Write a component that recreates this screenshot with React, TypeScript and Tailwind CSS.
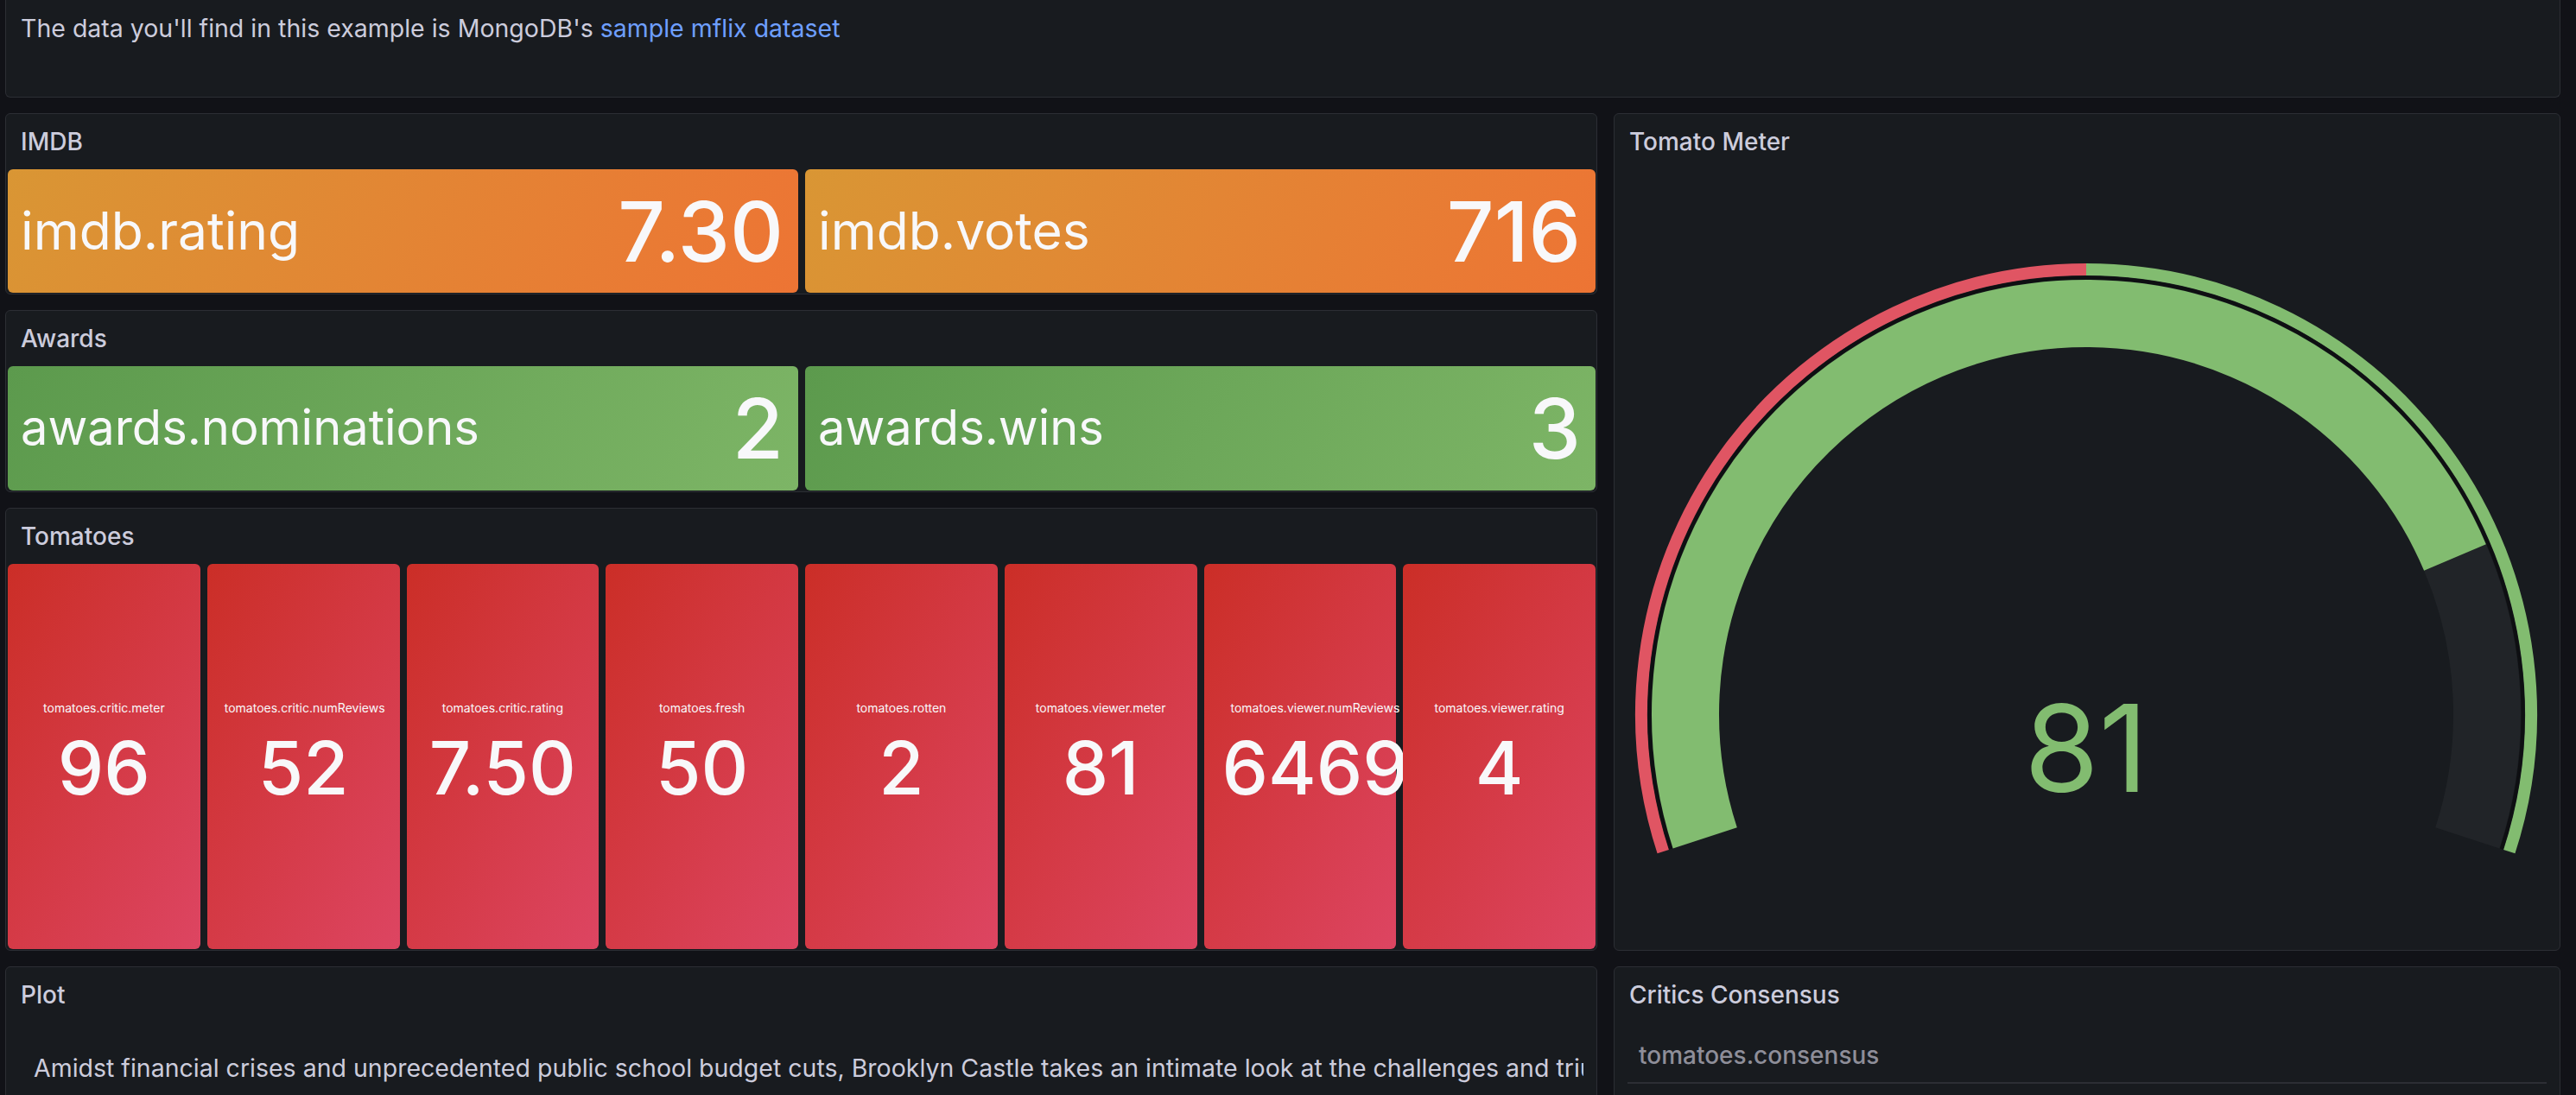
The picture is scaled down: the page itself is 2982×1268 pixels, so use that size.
import React from "react";

// gauge geometry, in svg units of the Tomato Meter body
const CX = 546;
const CY = 631;
const START = 198;
const SWEEP = 216;

function pt(r: number, a: number): [number, number] {
  const rad = (a * Math.PI) / 180;
  return [CX + r * Math.cos(rad), CY - r * Math.sin(rad)];
}

function arc(r: number, a1: number, a2: number) {
  const [x1, y1] = pt(r, a1);
  const [x2, y2] = pt(r, a2);
  const large = a1 - a2 > 180 ? 1 : 0;
  return `M ${x1} ${y1} A ${r} ${r} 0 ${large} 1 ${x2} ${y2}`;
}

function angleOf(pct: number) {
  return START - (pct / 100) * SWEEP;
}

function PanelTitle(props: { title: string }) {
  return (
    <div className="h-[64px] flex items-center pl-[17px] text-[28px] font-medium text-[#ccccdc] shrink-0">
      {props.title}
    </div>
  );
}

function WideStat(props: { name: string; value: string; gradient: string; nameSize: string }) {
  return (
    <div className={`flex-1 h-full rounded-md flex items-center justify-between pl-[15px] pr-[17px] text-[#f8f8fa] ${props.gradient}`}>
      <span className={`${props.nameSize} leading-[1.2]`}>{props.name}</span>
      <span className="text-[96px] leading-none font-medium">{props.value}</span>
    </div>
  );
}

// wide values spill out of the box from the left, like the grafana stat does
function TallStat(props: { name: string; value: string; spill?: boolean }) {
  return (
    <div className="h-full rounded-md flex flex-col justify-center pb-[9px] text-[#f8f8fa] bg-[linear-gradient(120deg,#cb2e27,#dd4562)]">
      <div className={`text-[14px] leading-[16px] whitespace-nowrap ${props.spill ? "pl-[31px] text-left" : "px-[20px] text-center"}`}>
        {props.name}
      </div>
      <div className={`text-[85px] leading-none font-medium mt-[19px] whitespace-nowrap ${props.spill ? "pl-[21px] text-left" : "px-[20px] text-center"}`}>
        {props.value}
      </div>
    </div>
  );
}

const orange = "bg-[linear-gradient(120deg,#d99634,#ed7434)]";
const green = "bg-[linear-gradient(120deg,#5c9a4d,#7db566)]";

const tomatoes = [
  { name: "tomatoes.critic.meter", value: "96" },
  { name: "tomatoes.critic.numReviews", value: "52" },
  { name: "tomatoes.critic.rating", value: "7.50" },
  { name: "tomatoes.fresh", value: "50" },
  { name: "tomatoes.rotten", value: "2" },
  { name: "tomatoes.viewer.meter", value: "81" },
  { name: "tomatoes.viewer.numReviews", value: "6469", spill: true },
  { name: "tomatoes.viewer.rating", value: "4" },
];

function Gauge(props: { value: number }) {
  const mid = angleOf(50);
  const end = angleOf(100);
  const fill = angleOf(props.value);
  return (
    <svg className="w-full h-full" viewBox="0 0 1094 904">
      <path d={arc(515, START, mid)} stroke="#e05563" strokeWidth={14} fill="none" />
      <path d={arc(515, mid, end)} stroke="#82bc70" strokeWidth={14} fill="none" />
      <path d={arc(505.5, START, end)} stroke="#0e0f12" strokeWidth={4} fill="none" />
      <path d={arc(464, fill, end)} stroke="#212428" strokeWidth={78} fill="none" />
      <path d={arc(464, START, fill)} stroke="#82bc70" strokeWidth={78} fill="none" />
      <text x={CX} y={721} textAnchor="middle" fontSize={140} fill="#82bc70" fontFamily="Inter, sans-serif">
        {props.value}
      </text>
    </svg>
  );
}

export default function App() {
  const panel = "bg-[#181b1f] border border-[#2c2e34] rounded-md";
  return (
    <div className="w-[2982px] h-[1268px] overflow-hidden bg-[#111217] pl-[6px] pr-[18px] font-['Inter',sans-serif] text-[#ccccdc]">
      {/* text panel, its top is scrolled out of view */}
      <div className="h-[113px] bg-[#181b1f] border-x border-b border-[#2c2e34] rounded-b-md pt-[12px] pl-[17px] text-[28.5px] leading-[42px]">
        The data you'll find in this example is MongoDB's{" "}
        <a className="text-[#6e9fff]">sample mflix dataset</a>
      </div>

      <div className="flex gap-[19px] mt-[18px]">
        <div className="w-[1843px] flex flex-col gap-[18px]">
          <div className={`h-[210px] flex flex-col ${panel}`}>
            <PanelTitle title="IMDB" />
            <div className="flex-1 flex gap-[8px] pl-[2px] pr-[1px] pb-[1px]">
              <WideStat name="imdb.rating" value="7.30" gradient={orange} nameSize="text-[60.5px]" />
              <WideStat name="imdb.votes" value="716" gradient={orange} nameSize="text-[60.5px]" />
            </div>
          </div>

          <div className={`h-[211px] flex flex-col ${panel}`}>
            <PanelTitle title="Awards" />
            <div className="flex-1 flex gap-[8px] pl-[2px] pr-[1px] pb-[1px]">
              <WideStat name="awards.nominations" value="2" gradient={green} nameSize="text-[56px]" />
              <WideStat name="awards.wins" value="3" gradient={green} nameSize="text-[56px]" />
            </div>
          </div>

          <div className={`h-[513px] flex flex-col ${panel}`}>
            <PanelTitle title="Tomatoes" />
            <div className="flex-1 grid grid-cols-8 gap-[8px] pl-[2px] pr-[1px] pb-[1px]">
              {tomatoes.map((t) => (
                <TallStat key={t.name} name={t.name} value={t.value} spill={t.spill} />
              ))}
            </div>
          </div>
        </div>

        <div className={`w-[1096px] h-[970px] flex flex-col ${panel}`}>
          <PanelTitle title="Tomato Meter" />
          <div className="flex-1">
            <Gauge value={81} />
          </div>
        </div>
      </div>

      <div className="flex gap-[19px] mt-[18px]">
        <div className={`w-[1843px] h-[300px] flex flex-col ${panel}`}>
          <PanelTitle title="Plot" />
          <div className="mx-[15px] overflow-hidden">
            <div className="pl-[17px] pt-[32px] text-[28.5px] leading-[42px] whitespace-nowrap">
              Amidst financial crises and unprecedented public school budget cuts, Brooklyn Castle takes an intimate look at the challenges and triumphs of four members of a champion junior high school chess team.
            </div>
          </div>
        </div>

        <div className={`w-[1096px] h-[300px] flex flex-col ${panel}`}>
          <PanelTitle title="Critics Consensus" />
          <div className="mx-[15px]">
            <div className="pl-[13px] pt-[19px] pb-[12px] text-[28px] leading-[38px] font-medium text-[#8e8e99] border-b-2 border-[#2c2e34]">
              tomatoes.consensus
            </div>
          </div>
        </div>
      </div>
    </div>
  );
}
